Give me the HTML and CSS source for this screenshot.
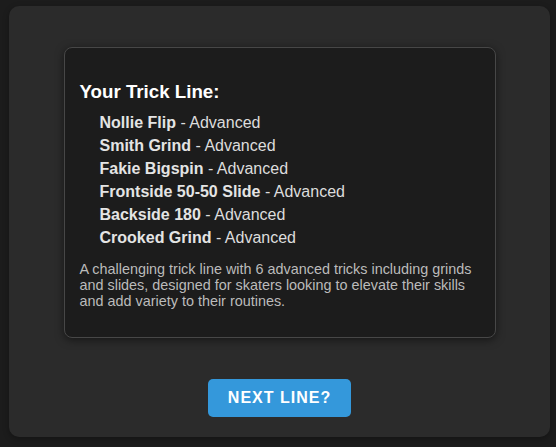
FILE: index.html
```html
<!DOCTYPE html>
<html>
<head>
<meta charset="utf-8">
<link rel="stylesheet" href="styles.css">
</head>
<body>
<div class="panel">
  <div class="card">
    <h3 class="title">Your Trick Line:</h3>
    <ul class="tricks">
      <li><strong>Nollie Flip</strong> - Advanced</li>
      <li><strong>Smith Grind</strong> - Advanced</li>
      <li><strong>Fakie Bigspin</strong> - Advanced</li>
      <li><strong>Frontside 50-50 Slide</strong> - Advanced</li>
      <li><strong>Backside 180</strong> - Advanced</li>
      <li><strong>Crooked Grind</strong> - Advanced</li>
    </ul>
    <p class="desc">A challenging trick line with 6 advanced tricks including grinds and slides, designed for skaters looking to elevate their skills and add variety to their routines.</p>
  </div>
  <button class="next">NEXT LINE?</button>
</div>
</body>
</html>
```
FILE: styles.css
```css
html, body {
  margin: 0;
  background: #1c1c1c;
  font-family: "Liberation Sans", Arial, sans-serif;
}
body {
  padding: 6px 6px 10px 9px;
}
.panel {
  background: #2b2b2b;
  border-radius: 10px;
  height: 431px;
  box-sizing: border-box;
  padding: 41px 20px 20px;
  display: flex;
  flex-direction: column;
  align-items: center;
  box-shadow: 0 2px 6px rgba(0,0,0,0.3);
}
.card {
  width: 432px;
  height: 291px;
  box-sizing: border-box;
  background: #1c1c1c;
  border: 1px solid #474747;
  border-radius: 8px;
  padding: 15px 15px;
  box-shadow: 0 2px 8px rgba(0,0,0,0.5);
}
.title {
  color: #ffffff;
  font-size: 18.72px;
  font-weight: bold;
  margin: 18px 0 8px;
}
.tricks {
  list-style: none;
  margin: 0;
  padding: 0 0 0 20px;
  color: #dddddd;
  font-size: 16px;
  line-height: 23px;
}
.tricks strong {
  color: #e4e4e4;
}
.desc {
  color: #bbbbbb;
  font-size: 14.4px;
  line-height: 16px;
  margin: 12px 0 0;
}
.next {
  margin-top: 41px;
  background: #3498db;
  color: #ffffff;
  border: none;
  border-radius: 5px;
  font-family: "Liberation Sans", Arial, sans-serif;
  font-size: 16px;
  font-weight: bold;
  letter-spacing: 1px;
  padding: 10px 20px;
  height: 38px;
  line-height: 18px;
}
```
